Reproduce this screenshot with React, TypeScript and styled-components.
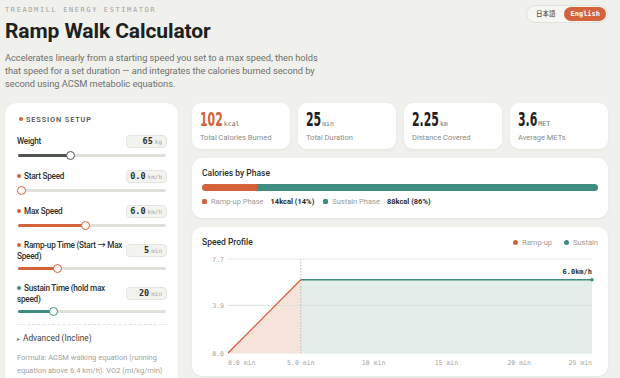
import styled, { createGlobalStyle } from "styled-components";

const ORANGE = "#d4623b";
const TEAL = "#3f8d80";
const SANS = `"Roboto", "Noto Sans", "Noto Sans CJK JP", sans-serif`;
const MONO = `"DejaVu Sans Mono", "Liberation Mono", monospace`;

const GlobalStyle = createGlobalStyle`
  html, body {
    margin: 0;
    padding: 0;
    background: #f0f0ec;
    font-family: ${SANS};
    color: #1e211f;
  }
`;

type Param = {
  label: string;
  value: string;
  unit: string;
  pct: number;
  color: string;
  dot?: string;
};

const params: Param[] = [
  { label: "Weight", value: "65", unit: "kg", pct: 36, color: "#4f544f" },
  { label: "Start Speed", value: "0.0", unit: "km/h", pct: 3, color: ORANGE, dot: ORANGE },
  { label: "Max Speed", value: "6.0", unit: "km/h", pct: 46, color: ORANGE, dot: ORANGE },
  {
    label: "Ramp-up Time (Start → Max Speed)",
    value: "5",
    unit: "min",
    pct: 27,
    color: ORANGE,
    dot: ORANGE,
  },
  {
    label: "Sustain Time (hold max speed)",
    value: "20",
    unit: "min",
    pct: 24,
    color: TEAL,
    dot: TEAL,
  },
];

const stats = [
  { value: "102", unit: "kcal", label: "Total Calories Burned", accent: true },
  { value: "25", unit: "min", label: "Total Duration" },
  { value: "2.25", unit: "km", label: "Distance Covered" },
  { value: "3.6", unit: "MET", label: "Average METs" },
];

// big numbers are DejaVu Sans Bold squeezed horizontally; work out how much
// layout width the squeeze frees so the unit sits right after the digits
const NUM_SIZE = 19.5;
const NUM_SCALE = 0.56;
const squeezeOffset = (v: string) => {
  const w = [...v].reduce((a, c) => a + (c === "." ? 0.38 : 0.696), 0) * NUM_SIZE;
  return -(1 - NUM_SCALE) * w;
};

function SpeedChart() {
  const left = 26;
  const right = 390;
  const top = 7;
  const bottom = 101;
  const xAt = (m: number) => left + (m / 25) * (right - left);
  const yAt = (v: number) => bottom - (v / 7.7) * (bottom - top);
  const rampX = xAt(5);
  const peakY = yAt(6);
  const ticks = [
    { m: 0, t: "0.0 min" },
    { m: 5, t: "5.0 min" },
    { m: 10, t: "10 min" },
    { m: 15, t: "15 min" },
    { m: 20, t: "20 min" },
    { m: 25, t: "25 min" },
  ];
  return (
    <svg width="396" height="116" viewBox="0 0 396 116">
      {[7.7, 3.9, 0].map((v) => (
        <g key={v}>
          <line x1={left} x2={right} y1={yAt(v)} y2={yAt(v)} stroke="#e6e6e2" strokeWidth="1" />
          <text
            x={left - 4}
            y={yAt(v) + 2.5}
            textAnchor="end"
            fontFamily={MONO}
            fontSize="6.5"
            fill="#a5a5a0"
          >
            {v.toFixed(1)}
          </text>
        </g>
      ))}
      <polygon
        points={`${left},${bottom} ${rampX},${peakY} ${rampX},${bottom}`}
        fill="#f6e4dc"
      />
      <rect
        x={rampX}
        y={peakY}
        width={right - rampX}
        height={bottom - peakY}
        fill="#e3eeeb"
      />
      <line x1={left} x2={right} y1={yAt(3.9)} y2={yAt(3.9)} stroke="#d8e2df" strokeWidth="1" />
      <line
        x1={rampX}
        x2={rampX}
        y1={top}
        y2={bottom}
        stroke="#a8a8a4"
        strokeWidth="0.8"
        strokeDasharray="1.5 1.5"
      />
      <line x1={left} y1={bottom} x2={rampX} y2={peakY} stroke={ORANGE} strokeWidth="1.3" />
      <line x1={rampX} y1={peakY} x2={right} y2={peakY} stroke={TEAL} strokeWidth="1.3" />
      <circle cx={right} cy={peakY} r="1.8" fill={TEAL} />
      <text
        x={right}
        y={peakY - 6}
        textAnchor="end"
        fontFamily={MONO}
        fontSize="7"
        fontWeight="bold"
        fill="#2b2e2c"
      >
        6.0km/h
      </text>
      {ticks.map((t) => (
        <text
          key={t.m}
          x={t.m === 0 ? left : t.m === 25 ? right : xAt(t.m)}
          y="113"
          textAnchor={t.m === 0 ? "start" : t.m === 25 ? "end" : "middle"}
          fontFamily={MONO}
          fontSize="6.5"
          fill="#a5a5a0"
        >
          {t.t}
        </text>
      ))}
    </svg>
  );
}

export default function App() {
  return (
    <>
      <GlobalStyle />
      <Page>
        <Header>
          <HeaderText>
            <Eyebrow>TREADMILL ENERGY ESTIMATOR</Eyebrow>
            <Title>Ramp Walk Calculator</Title>
            <Description>
              Accelerates linearly from a starting speed you set to a max speed, then holds
              that speed for a set duration — and integrates the calories burned second by
              second using ACSM metabolic equations.
            </Description>
          </HeaderText>
          <LangToggle>
            <LangButton>日本語</LangButton>
            <LangButton $active>English</LangButton>
          </LangToggle>
        </Header>

        <Main>
          <SetupPanel>
            <PanelTitle>
              <Dot $color={ORANGE} />
              SESSION SETUP
            </PanelTitle>
            {params.map((p) => (
              <Field key={p.label}>
                <FieldHead>
                  <FieldLabel>
                    {p.dot && <Dot $color={p.dot} />}
                    {p.label}
                  </FieldLabel>
                  <ValueBox>
                    <ValueNum>{p.value}</ValueNum>
                    <ValueUnit>{p.unit}</ValueUnit>
                  </ValueBox>
                </FieldHead>
                <Track>
                  <Fill $color={p.color} style={{ width: `${p.pct}%` }} />
                  <Thumb $color={p.color} style={{ left: `${p.pct}%` }} />
                </Track>
              </Field>
            ))}
            <Divider />
            <Advanced>
              <Caret>▸</Caret> Advanced (Incline)
            </Advanced>
            <Formula>
              Formula: ACSM walking equation (running equation above 6.4 km/h). VO2
              (ml/kg/min) = 3.5 + 0.1 × speed + 1.8 × speed × grade. Converted at 5 kcal per
              liter O2.
            </Formula>
          </SetupPanel>

          <RightColumn>
            <StatRow>
              {stats.map((s) => (
                <StatCard key={s.label}>
                  <StatValue>
                    <StatNum $accent={s.accent} style={{ marginRight: squeezeOffset(s.value) }}>
                      {s.value}
                    </StatNum>
                    <StatUnit>{s.unit}</StatUnit>
                  </StatValue>
                  <StatLabel>{s.label}</StatLabel>
                </StatCard>
              ))}
            </StatRow>

            <Card>
              <CardTitle>Calories by Phase</CardTitle>
              <PhaseBar>
                <PhaseSeg $color={ORANGE} style={{ width: "14%" }} />
                <PhaseSeg $color={TEAL} style={{ flex: 1 }} />
              </PhaseBar>
              <Legend>
                <LegendItem>
                  <Square $color={ORANGE} />
                  Ramp-up Phase <b>14kcal (14%)</b>
                </LegendItem>
                <LegendItem>
                  <Square $color={TEAL} />
                  Sustain Phase <b>88kcal (86%)</b>
                </LegendItem>
              </Legend>
            </Card>

            <ChartCard>
              <ChartHead>
                <CardTitle>Speed Profile</CardTitle>
                <Legend>
                  <LegendItem>
                    <Square $color={ORANGE} $round />
                    Ramp-up
                  </LegendItem>
                  <LegendItem>
                    <Square $color={TEAL} $round />
                    Sustain
                  </LegendItem>
                </Legend>
              </ChartHead>
              <SpeedChart />
            </ChartCard>
          </RightColumn>
        </Main>
      </Page>
    </>
  );
}

const Page = styled.div`
  width: 603px;
  margin-left: 5px;
  padding-top: 5px;
`;

const Header = styled.header`
  display: flex;
  justify-content: space-between;
  align-items: flex-start;
`;

const HeaderText = styled.div`
  display: flex;
  flex-direction: column;
`;

const Eyebrow = styled.div`
  font-family: ${MONO};
  font-size: 7px;
  letter-spacing: 1.6px;
  color: #a2a29d;
  margin-top: 1px;
`;

const Title = styled.h1`
  margin: 4px 0 0;
  font-size: 21px;
  font-weight: 700;
  letter-spacing: -0.1px;
  color: #1d211f;
  line-height: 26px;
`;

const Description = styled.p`
  margin: 7px 0 0;
  width: 318px;
  font-size: 9.3px;
  letter-spacing: -0.05px;
  line-height: 13px;
  color: #6f716d;
`;

const LangToggle = styled.div`
  display: flex;
  align-items: center;
  gap: 3px;
  padding: 1px;
  background: #f6f6f3;
  border: 1px solid #e2e2dd;
  border-radius: 9px;
`;

const LangButton = styled.span<{ $active?: boolean }>`
  font-family: ${(p) => (p.$active ? MONO : SANS)};
  font-size: ${(p) => (p.$active ? "7px" : "6.5px")};
  line-height: 10px;
  font-weight: ${(p) => (p.$active ? 700 : 500)};
  color: ${(p) => (p.$active ? "#fff" : "#555")};
  background: ${(p) => (p.$active ? ORANGE : "transparent")};
  padding: ${(p) => (p.$active ? "2px 6px" : "2px 6px 2px 8px")};
  border-radius: 7px;
`;

const Main = styled.div`
  display: flex;
  gap: 14px;
  margin-top: 13px;
  align-items: flex-start;
`;

const SetupPanel = styled.aside`
  width: 173px;
  box-sizing: border-box;
  background: #fff;
  border-radius: 12px;
  padding: 12px 11px 20px 12px;
  box-shadow: 0 1px 3px rgba(0, 0, 0, 0.05);
  display: flex;
  flex-direction: column;
`;

const PanelTitle = styled.div`
  display: flex;
  align-items: center;
  font-size: 7.3px;
  font-weight: 600;
  letter-spacing: 0.9px;
  color: #555854;
  margin-bottom: 11px;
  padding-left: 2px;
`;

const Dot = styled.span<{ $color: string }>`
  display: inline-block;
  flex: none;
  width: 4px;
  height: 4px;
  border-radius: 50%;
  background: ${(p) => p.$color};
  margin-right: 3px;
  vertical-align: middle;
  position: relative;
  top: -1px;
`;

const Field = styled.div`
  display: flex;
  flex-direction: column;
  margin-bottom: 13px;
`;

const FieldHead = styled.div`
  display: flex;
  justify-content: space-between;
  align-items: center;
  gap: 2px;
`;

const FieldLabel = styled.div`
  flex: 1;
  font-size: 8.2px;
  font-weight: 500;
  letter-spacing: -0.25px;
  line-height: 10.5px;
  color: #2d302e;
`;

const ValueBox = styled.div`
  flex: none;
  display: flex;
  align-items: baseline;
  justify-content: flex-end;
  gap: 2px;
  width: 41px;
  height: 13px;
  box-sizing: border-box;
  padding: 0 4px;
  background: #f3f3f0;
  border: 1px solid #e6e6e1;
  border-radius: 4px;
  line-height: 11px;
`;

const ValueNum = styled.span`
  font-family: ${MONO};
  font-size: 8.5px;
  font-weight: 700;
  color: #2d302e;
`;

const ValueUnit = styled.span`
  font-family: ${MONO};
  font-size: 6px;
  color: #a7a7a2;
`;

const Track = styled.div`
  position: relative;
  height: 3px;
  margin: 6px 1px 0;
  background: #e1e1dc;
  border-radius: 2px;
`;

const Fill = styled.div<{ $color: string }>`
  height: 100%;
  background: ${(p) => p.$color};
  border-radius: 2px;
`;

const Thumb = styled.div<{ $color: string }>`
  position: absolute;
  top: 50%;
  width: 7px;
  height: 7px;
  margin: -5px 0 0 -5px;
  border-radius: 50%;
  background: #fff;
  border: 1.5px solid ${(p) => p.$color};
`;

const Divider = styled.div`
  border-top: 1px dashed #e3e3de;
  margin: -2px 0 8px;
`;

const Advanced = styled.div`
  font-size: 8.3px;
  color: #3d403e;
  display: flex;
  align-items: center;
  gap: 3px;
`;

const Caret = styled.span`
  font-size: 6px;
  color: #777;
`;

const Formula = styled.p`
  margin: 9px 0 0;
  font-size: 7.5px;
  line-height: 12.5px;
  color: #a3a39e;
`;

const RightColumn = styled.div`
  flex: 1;
  display: flex;
  flex-direction: column;
  gap: 9px;
`;

const StatRow = styled.div`
  display: grid;
  grid-template-columns: repeat(4, 1fr);
  gap: 8px;
`;

const StatCard = styled.div`
  height: 46px;
  box-sizing: border-box;
  background: #fff;
  border-radius: 9px;
  padding: 7px 8px 0;
  box-shadow: 0 1px 3px rgba(0, 0, 0, 0.05);
`;

const StatValue = styled.div`
  display: flex;
  align-items: baseline;
  gap: 1px;
  height: 20px;
`;

const StatNum = styled.span<{ $accent?: boolean }>`
  font-family: "DejaVu Sans", sans-serif;
  font-size: ${NUM_SIZE}px;
  font-weight: 700;
  line-height: 20px;
  color: ${(p) => (p.$accent ? ORANGE : "#1d211f")};
  display: inline-block;
  transform: scaleX(${NUM_SCALE});
  transform-origin: left;
`;

const StatUnit = styled.span`
  font-family: ${MONO};
  font-size: 6.5px;
  color: #6d6f6b;
`;

const StatLabel = styled.div`
  margin-top: 3px;
  font-size: 7.5px;
  color: #8a8c88;
`;

const Card = styled.section`
  background: #fff;
  border-radius: 10px;
  padding: 10px 10px 6px;
  box-shadow: 0 1px 3px rgba(0, 0, 0, 0.05);
`;

const ChartCard = styled(Card)`
  padding-bottom: 4px;
`;

const CardTitle = styled.div`
  font-size: 8.5px;
  font-weight: 500;
  color: #2d302e;
`;

const PhaseBar = styled.div`
  display: flex;
  height: 7px;
  margin-top: 6px;
  border-radius: 4px;
  overflow: hidden;
`;

const PhaseSeg = styled.div<{ $color: string }>`
  background: ${(p) => p.$color};
`;

const Legend = styled.div`
  display: flex;
  gap: 9px;
  margin-top: 6px;
  margin-bottom: 6px;
  font-size: 7.5px;
  color: #9a9c98;

  b {
    color: #2d302e;
    font-weight: 700;
    margin-left: 3px;
  }
`;

const LegendItem = styled.span`
  display: flex;
  align-items: center;
  gap: 4px;
`;

const Square = styled.span<{ $color: string; $round?: boolean }>`
  width: 5px;
  height: 5px;
  border-radius: ${(p) => (p.$round ? "50%" : "1.5px")};
  background: ${(p) => p.$color};
`;

const ChartHead = styled.div`
  display: flex;
  justify-content: space-between;
  align-items: center;
  margin-bottom: 5px;

  ${Legend} {
    margin: 0;
    gap: 12px;
  }
`;
